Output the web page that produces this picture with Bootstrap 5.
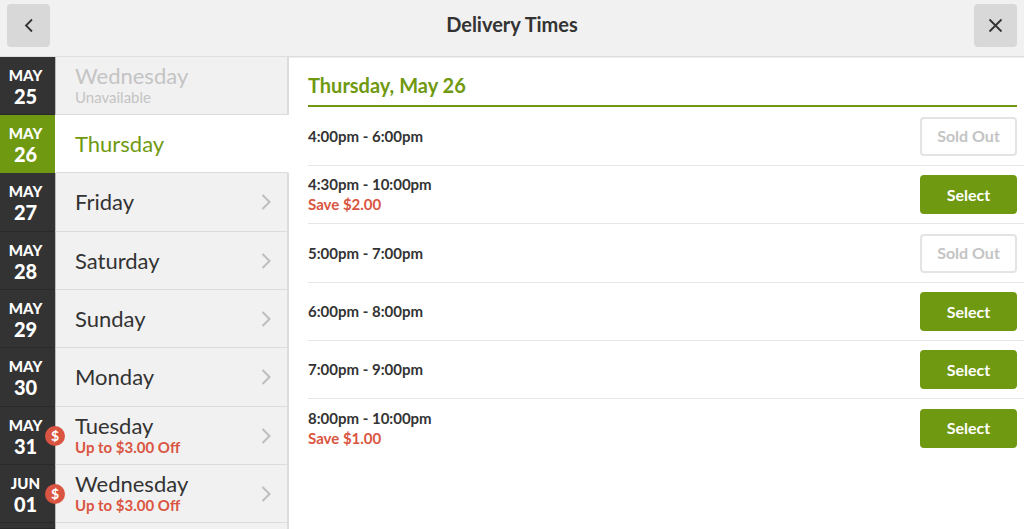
<!DOCTYPE html>
<html lang="en">
<head>
<meta charset="utf-8">
<meta name="viewport" content="width=device-width, initial-scale=1">
<title>Delivery Times</title>
<link href="https://cdn.jsdelivr.net/npm/bootstrap@5.3.0/dist/css/bootstrap.min.css" rel="stylesheet">
<style>
  :root { --leaf: #6f9910; --ink: #333; --promo: #da5541; --rule: #dcdcdc; --pane: #f1f1f1; }
  body { font-family: Lato, "Liberation Sans", sans-serif; color: var(--ink); background: #fff; }
  .topbar { background: var(--pane); border-bottom: 1px solid #dedede; padding: 4px 7px 9px; }
  .icon-btn { width: 43px; height: 43px; padding: 0; border: 0; border-radius: 4px; background: #d8d8d8; }
  .topbar h1 { font-size: 20px; line-height: 24px; font-weight: 700; padding-top: 8px; }
  .days { width: 289px; }
  .pane-scroll { overflow-y: auto; scrollbar-width: none; }
  .pane-scroll::-webkit-scrollbar { display: none; }
  .day { height: 58px; flex: none; color: var(--ink); }
  .day:nth-child(3n), .slot:nth-child(3n) { height: 59px; }
  .date { width: 55px; padding-right: 4px; background: var(--ink); color: #fff; font-weight: 900; line-height: 20px; border-bottom: 1px solid #292929; }
  .month { font-size: 15px; }
  .num { font-size: 20px; line-height: 22px; }
  .weekday { background: var(--pane); border-left: 1px solid #bbb; border-right: 2px solid var(--rule); border-bottom: 1px solid var(--rule); padding: 0 16px 0 19px; }
  .weekday-name { font-size: 22px; line-height: 22px; }
  .note { font-size: 15px; line-height: 20px; }
  .promo { color: var(--promo); font-weight: 700; }
  .day.unavailable .weekday { color: #c4c4c4; }
  .day.active .date { background: var(--leaf); border-color: var(--leaf); }
  .day.active .weekday { background: #fff; color: var(--leaf); border-left-color: #fff; border-right-color: #fff; }
  .coin { left: 55px; top: 50%; width: 20px; height: 20px; background: var(--promo); color: #fff; font-size: 14px; line-height: 20px; font-weight: 700; }
  .times { padding: 0 7px 0 19px; border-top: 1px solid #ececec; }
  .times h2 { font-size: 20px; line-height: 24px; font-weight: 700; color: var(--leaf); padding: 15px 0 8px; border-bottom: 2px solid var(--leaf); }
  .slot { height: 58px; }
  .slot + .slot { border-top: 1px solid #e6e6e6; margin-right: -7px; padding-right: 7px; }
  .slot-label { font-size: 15px; line-height: 20px; font-weight: 700; padding-bottom: 1px; }
  .btn-slot { width: 97px; height: 39px; padding: 0; font-size: 16px; line-height: 20px; font-weight: 700; border-radius: 4px; --bs-btn-color: #fff; --bs-btn-bg: var(--leaf); --bs-btn-border-color: var(--leaf); --bs-btn-hover-color: #fff; --bs-btn-hover-bg: #5f850b; --bs-btn-disabled-color: #c4c4c4; --bs-btn-disabled-bg: #fff; --bs-btn-disabled-border-color: #e4e4e4; --bs-btn-disabled-opacity: 1; --bs-btn-border-width: 2px; }
</style>
</head>
<body class="vh-100 d-flex flex-column overflow-hidden">
<header class="topbar d-flex align-items-start justify-content-between flex-shrink-0">
  <button type="button" class="btn icon-btn d-flex align-items-center justify-content-center" aria-label="Back">
    <svg width="16" height="16" viewBox="0 0 16 16" fill="none" stroke="#333" stroke-width="1.800"><path d="M11 1.500 5 7.500l6 6"/></svg>
  </button>
  <h1 class="m-0">Delivery Times</h1>
  <button type="button" class="btn icon-btn d-flex align-items-center justify-content-center" aria-label="Close">
    <svg width="16" height="16" viewBox="0 0 16 16" fill="none" stroke="#333" stroke-width="1.800"><path d="M2.500 1.500l12 12M14.500 1.500l-12 12"/></svg>
  </button>
</header>
<main class="d-flex flex-grow-1 overflow-hidden">
  <nav class="days pane-scroll d-flex flex-column flex-shrink-0" aria-label="Delivery days" id="days"></nav>
  <section class="times pane-scroll flex-grow-1">
    <h2 class="m-0">Thursday, May 26</h2>
    <ul class="list-unstyled m-0" id="slots"></ul>
  </section>
</main>
<script>
  const days = [
    ["MAY", "25", "Wednesday", "Unavailable", "unavailable"],
    ["MAY", "26", "Thursday", "", "active"],
    ["MAY", "27", "Friday"],
    ["MAY", "28", "Saturday"],
    ["MAY", "29", "Sunday"],
    ["MAY", "30", "Monday"],
    ["MAY", "31", "Tuesday", "Up to $3.00 Off"],
    ["JUN", "01", "Wednesday", "Up to $3.00 Off"]
  ];
  const chevron = '<svg class="flex-shrink-0" width="10" height="16" viewBox="0 0 10 16" fill="none" stroke="#bdbdbd" stroke-width="2"><path d="M1.500 1 8.500 8l-7 7"/></svg>';
  document.getElementById("days").innerHTML = days.map(([month, num, name, note = "", state = ""]) => {
    const promo = note && !state;
    return `<a href="#" class="day ${state} d-flex position-relative text-decoration-none">
      <span class="date d-flex flex-column justify-content-center align-items-center flex-shrink-0"><span class="month">${month}</span><span class="num">${num}</span></span>
      ${promo ? '<span class="coin position-absolute translate-middle rounded-circle text-center">$</span>' : ""}
      <span class="weekday flex-grow-1 d-flex align-items-center justify-content-between">
        <span class="d-flex flex-column"><span class="weekday-name">${name}</span>${note ? `<span class="note ${promo ? "promo" : ""}">${note}</span>` : ""}</span>
        ${state ? "" : chevron}
      </span></a>`;
  }).join("") + '<div class="d-flex flex-grow-1"><span class="date"></span><span class="weekday border-bottom-0 flex-grow-1"></span></div>';

  const slots = [
    ["4:00pm - 6:00pm", "", false],
    ["4:30pm - 10:00pm", "Save $2.00", true],
    ["5:00pm - 7:00pm", "", false],
    ["6:00pm - 8:00pm", "", true],
    ["7:00pm - 9:00pm", "", true],
    ["8:00pm - 10:00pm", "Save $1.00", true]
  ];
  document.getElementById("slots").innerHTML = slots.map(([time, save, open]) =>
    `<li class="slot d-flex align-items-center justify-content-between">
      <div class="slot-label">${time}${save ? `<div class="promo">${save}</div>` : ""}</div>
      <button type="button" class="btn btn-slot" ${open ? "" : "disabled"}>${open ? "Select" : "Sold Out"}</button>
    </li>`).join("");
</script>
<script src="https://cdn.jsdelivr.net/npm/bootstrap@5.3.0/dist/js/bootstrap.bundle.min.js"></script>
</body>
</html>
